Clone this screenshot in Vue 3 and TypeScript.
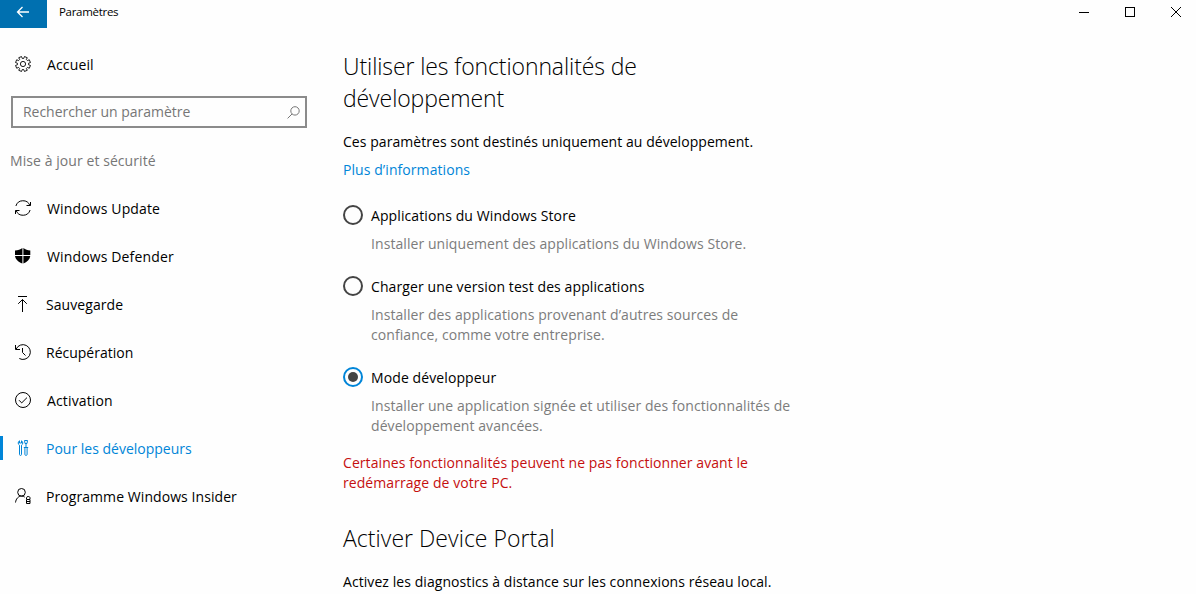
<script setup lang="ts">
interface NavItem {
  id: string
  label: string
  active?: boolean
}

interface Choice {
  id: string
  label: string
  lines: string[]
}

const navItems: NavItem[] = [
  { id: 'update', label: 'Windows Update' },
  { id: 'defender', label: 'Windows Defender' },
  { id: 'backup', label: 'Sauvegarde' },
  { id: 'recovery', label: 'Récupération' },
  { id: 'activation', label: 'Activation' },
  { id: 'developers', label: 'Pour les développeurs', active: true },
  { id: 'insider', label: 'Programme Windows Insider' },
]

const choices: Choice[] = [
  { id: 'store', label: 'Applications du Windows Store', lines: ['Installer uniquement des applications du Windows Store.'] },
  {
    id: 'sideload',
    label: 'Charger une version test des applications',
    lines: ['Installer des applications provenant d’autres sources de', 'confiance, comme votre entreprise.'],
  },
  {
    id: 'devmode',
    label: 'Mode développeur',
    lines: ['Installer une application signée et utiliser des fonctionnalités de', 'développement avancées.'],
  },
]

const selected = 'devmode'

// Outline of the eight-toothed settings gear
const gearPath = (() => {
  const points: string[] = []
  for (let i = 0; i < 8; i++) {
    const base = ((i + 0.5) * Math.PI) / 4
    for (const [offset, radius] of [[-0.26, 5.6], [-0.2, 7.6], [0.2, 7.6], [0.26, 5.6]]) {
      points.push(`${(8 + radius * Math.cos(base + offset)).toFixed(2)} ${(8 + radius * Math.sin(base + offset)).toFixed(2)}`)
    }
  }
  return `M${points.join('L')}Z`
})()
</script>

<template>
  <div class="window">
    <header class="titlebar">
      <button class="back" aria-label="Retour">
        <svg width="14" height="12" viewBox="0 0 14 12"><path d="M13 6H1.5M6.5 1L1.5 6l5 5" /></svg>
      </button>
      <span class="title">Paramètres</span>
      <div class="controls">
        <svg width="46" height="24" viewBox="0 0 46 24" shape-rendering="crispEdges"><path d="M17 12.5h10" /></svg>
        <svg width="46" height="24" viewBox="0 0 46 24" shape-rendering="crispEdges"><path d="M17.5 7.5h9v9h-9z" /></svg>
        <svg width="46" height="24" viewBox="0 0 46 24"><path d="M17 7l10 10M27 7L17 17" /></svg>
      </div>
    </header>

    <div class="body">
      <nav class="sidebar">
        <div class="item home">
          <svg class="icon gear" width="16" height="16" viewBox="0 0 16 16">
            <path :d="gearPath" />
            <circle cx="8" cy="8" r="2.6" />
          </svg>
          <span>Accueil</span>
        </div>

        <div class="search">
          <span>Rechercher un paramètre</span>
          <svg width="13" height="13" viewBox="0 0 13 13"><circle cx="8" cy="4.9" r="4.2" /><path d="M5 8L.6 12.4" /></svg>
        </div>

        <div class="category">Mise à jour et sécurité</div>

        <div v-for="item in navItems" :key="item.id" :class="['item', item.id, { active: item.active }]">
          <svg class="icon" width="16" height="16" viewBox="0 0 16 16">
            <template v-if="item.id === 'update'">
              <path d="M.9 6A7.400 7.400 0 0 1 14.900 5.500M15.500 2v3.500h-4M15.100 10A7.400 7.400 0 0 1 1.100 10.500M.5 14v-3.500h4" />
            </template>
            <template v-else-if="item.id === 'defender'">
              <path class="solid" d="M7.400 0v7H0V2.500C3 2.500 5.500 1.500 7.400 0zM8.400 0C10.500 1.500 12.500 2.500 15.300 2.500V7H8.400zM0 8h7.400v7.500C3.500 14 .5 11.500 0 8zM8.400 8h6.900c-.5 3.500-3.200 6-6.900 7.500z" />
            </template>
            <template v-else-if="item.id === 'backup'">
              <path d="M3 .5h9M7.500 16V3.500M3.200 7.800l4.300-4.300 4.300 4.300" />
            </template>
            <template v-else-if="item.id === 'recovery'">
              <path d="M1.200 5A7.400 7.400 0 1 1 4.300 14.500M.5 1v4.500H5M7.500 4v4.500L10.500 11.500" />
            </template>
            <template v-else-if="item.id === 'activation'">
              <circle cx="8" cy="8" r="7.500" />
              <path d="M4 8.200l2.700 2.700L12 5.600" />
            </template>
            <template v-else-if="item.id === 'developers'">
              <path d="M4.500 .8C3.600 1.200 3.200 2 3.200 3c0 1 .5 1.700 1.300 2.200v9.300c0 1.200 2 1.200 2 0V5.200C7.300 4.700 7.800 4 7.800 3c0-1-.4-1.800-1.300-2.200V3h-2z" />
              <path d="M9.500 .5h3l-.5 3h-2zM11 3.500v4M8.800 7.500h4.400M9.900 7.500v7c0 1.200 2.200 1.200 2.200 0v-7" />
            </template>
            <template v-else>
              <circle cx="6.500" cy="4.300" r="3.800" />
              <path d="M.5 14.500C1 10.800 3.200 8.200 6.500 8.100c1.300 0 2.400.3 3.200 1" />
              <path d="M11.500 11V9.700c0-1.600 3.500-1.600 3.500 0V11M11.500 11.500h3.500v4h-3.500zM11.500 13.500h3.500" />
            </template>
          </svg>
          <span>{{ item.label }}</span>
        </div>
      </nav>

      <main class="content">
        <h1 class="h-dev">Utiliser les fonctionnalités de<br />développement</h1>
        <p class="intro">Ces paramètres sont destinés uniquement au développement.</p>
        <a class="more">Plus d’informations</a>

        <div v-for="choice in choices" :key="choice.id" :class="['choice', choice.id]">
          <span :class="['radio', { checked: choice.id === selected }]"></span>
          <div class="choice-text">
            <div class="choice-label">{{ choice.label }}</div>
            <div class="description">
              <div v-for="line in choice.lines" :key="line" class="line">{{ line }}</div>
            </div>
          </div>
        </div>

        <p class="warning">Certaines fonctionnalités peuvent ne pas fonctionner avant le<br />redémarrage de votre PC.</p>
        <h1 class="h-portal">Activer Device Portal</h1>
        <p class="portal">Activez les diagnostics à distance sur les connexions réseau local.</p>
      </main>
    </div>
  </div>
</template>

<style>
body {
  overflow: hidden;
}
</style>

<style scoped>
.window {
  width: 1196px;
  height: 594px;
  overflow: hidden;
  background: #fefefe;
  color: #000;
  font: 400 14px/20px "Open Sans", "Noto Sans", sans-serif;
  letter-spacing: 0.07px;
  white-space: nowrap;
}
svg {
  flex: none;
  fill: none;
  stroke: currentColor;
  stroke-width: 1;
}
.titlebar {
  display: flex;
  height: 28px;
}
.back {
  display: flex;
  width: 47px;
  height: 28px;
  padding: 0 2px 4px 0;
  align-items: center;
  justify-content: center;
  border: 0;
  background: #0070b0;
  color: #fff;
}
.back svg {
  stroke-width: 1.3;
}
.title {
  margin-left: 12px;
  font-size: 11.5px;
  line-height: 24px;
  letter-spacing: -0.3px;
}
.controls {
  display: flex;
  margin-left: auto;
  margin-right: -4px;
}
.body {
  display: flex;
}
.sidebar {
  width: 343px;
  padding-top: 12px;
}
.item {
  display: flex;
  height: 48px;
  align-items: center;
  padding-left: 15px;
}
.item span {
  margin-left: 16px;
  padding-top: 1px;
}
.home span,
.update span,
.defender span,
.activation span {
  letter-spacing: 0.14px;
}
.backup span,
.recovery span,
.developers span,
.insider span {
  margin-left: 15px;
}
.recovery span,
.developers span {
  letter-spacing: 0;
}
.gear {
  stroke-width: 0.9;
}
.active {
  color: #0085d8;
  background: linear-gradient(#0085d8, #0085d8) 0 50% / 3px 24px no-repeat;
}
.solid {
  fill: currentColor;
  stroke: none;
}
.search {
  display: flex;
  box-sizing: border-box;
  width: 296px;
  height: 32px;
  margin: 8px 0 0 11px;
  padding: 0 5px 0 10px;
  align-items: center;
  justify-content: space-between;
  border: 2px solid #8b8b8b;
  color: #767676;
}
.search span {
  letter-spacing: -0.03px;
}
.category {
  height: 20px;
  margin: 23px 0 13px 10px;
  color: #767676;
}
.content {
  padding-top: 22px;
}
h1 {
  margin: 0;
  font-size: 23px;
  font-weight: 300;
  line-height: 32px;
}
.h-dev {
  letter-spacing: -0.1px;
}
p {
  margin: 0;
}
.intro {
  margin-top: 18px;
  letter-spacing: 0.05px;
}
.more {
  display: block;
  margin: 8px 0 26px;
  color: #0085d8;
}
.choice {
  display: flex;
  margin-bottom: 23px;
}
.choice-label {
  letter-spacing: 0.1px;
}
.radio {
  display: grid;
  box-sizing: border-box;
  width: 20px;
  height: 20px;
  margin: -1px 8px 0 0;
  place-items: center;
  border: 2px solid #444;
  border-radius: 50%;
}
.checked {
  border-color: #0085d8;
}
.checked::after {
  width: 10px;
  height: 10px;
  border-radius: 50%;
  background: #444;
  content: "";
}
.description {
  margin-top: 8px;
  color: #7c7c7c;
}
.devmode {
  margin-bottom: 17px;
}
.warning {
  color: #c50f0f;
}
.h-portal {
  margin-top: 29px;
  letter-spacing: 0.04px;
}
.portal {
  margin-top: 18px;
}
</style>
